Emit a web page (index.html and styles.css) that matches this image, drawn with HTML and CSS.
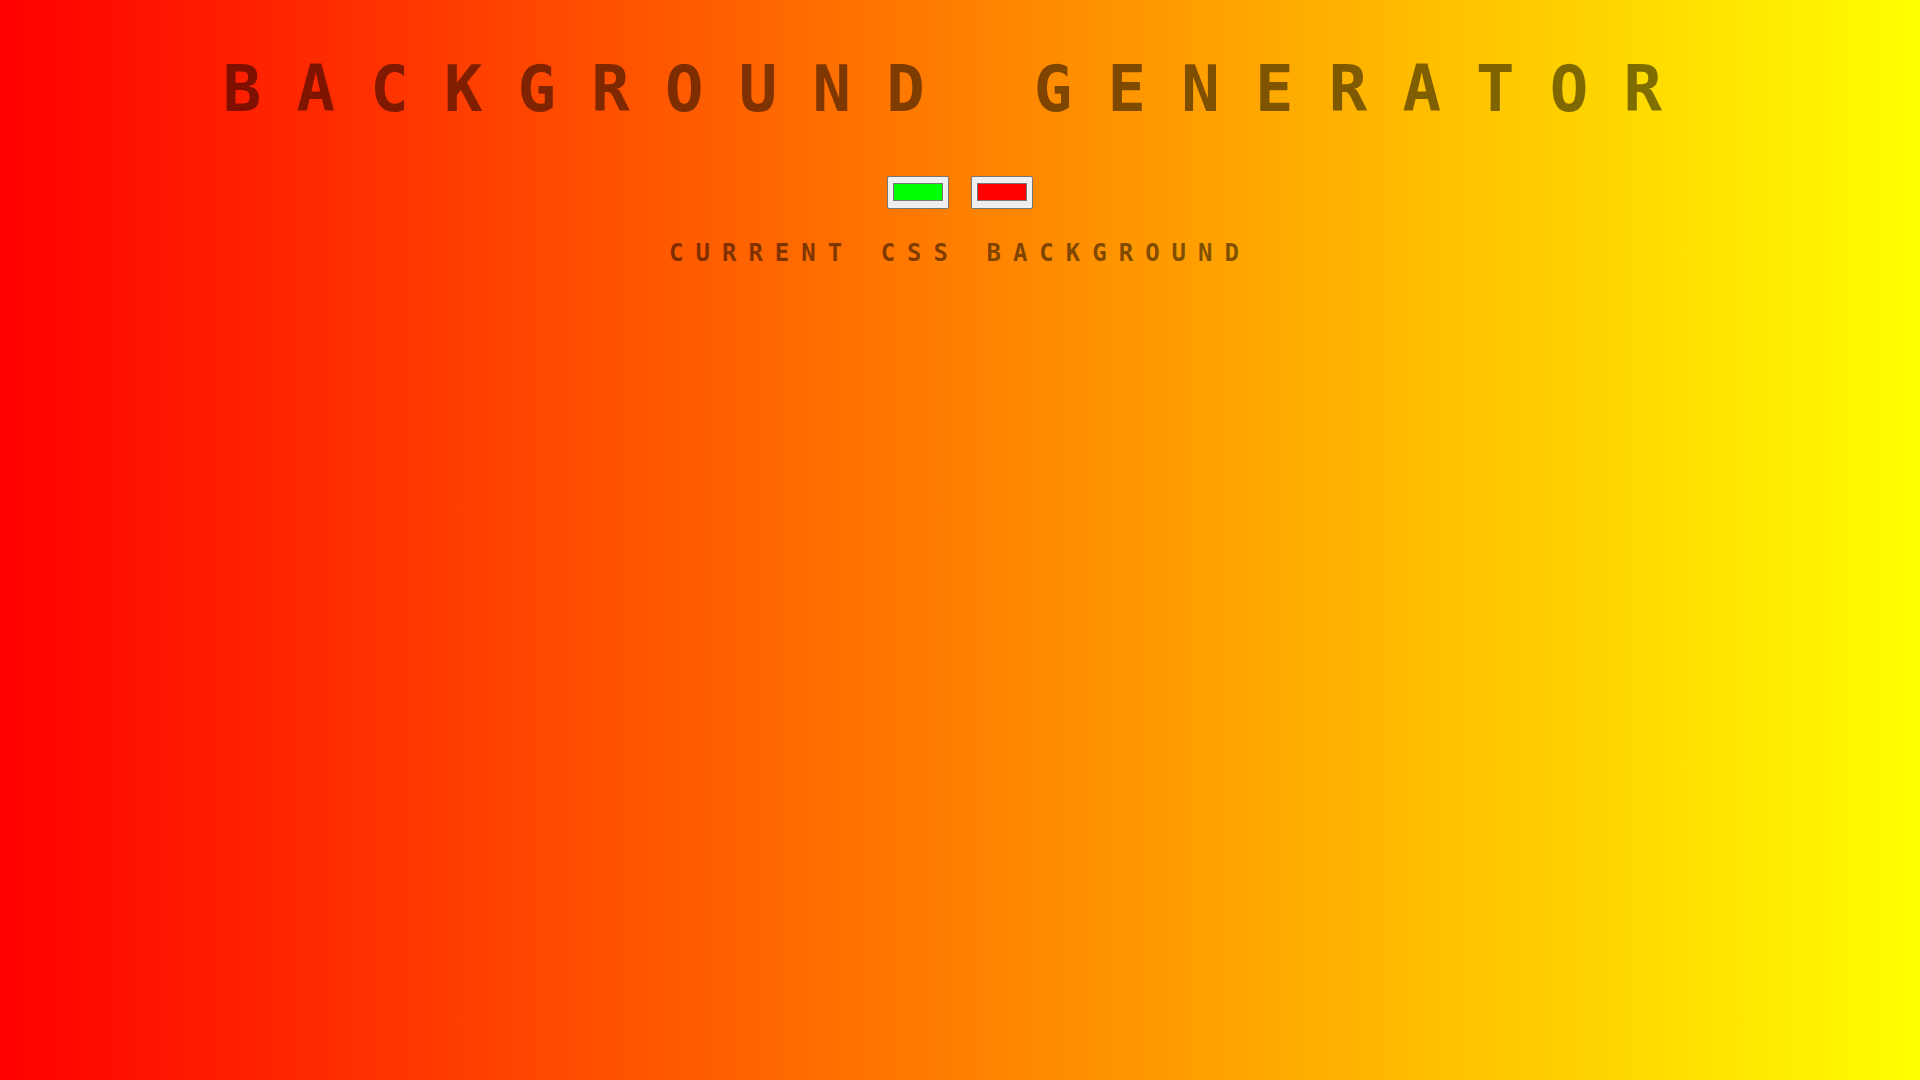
FILE: index.html
```html
<!DOCTYPE html>
<html lang="en">

<head>
  <meta charset="UTF-8">
  <meta name="viewport" content="width=device-width, initial-scale=1.0">
  <title>Background Generator</title>
  <link rel="stylesheet" href="styles.css">
</head>

<body>
  <h1 class="title">Background Generator</h1>

  <div class="pickers">
    <input class="color1" type="color" name="color1" value="#00ff00">
    <input class="color2" type="color" name="color2" value="#ff0000">
  </div>

  <h2 class="subtitle">Current CSS Background</h2>
  <h3 class="css-output"></h3>
</body>

</html>
```

FILE: styles.css
```css
* {
  box-sizing: border-box;
}

body {
  margin: 0;
  min-height: 100vh;
  background: linear-gradient(to right, red, yellow);
  font-family: 'DejaVu Sans Mono', monospace;
  color: rgba(0, 0, 0, 0.5);
  text-align: center;
}

.title {
  margin: 52px 0 50px;
  font-size: 64px;
  font-weight: 700;
  letter-spacing: 0.55em;
  text-transform: uppercase;
}

.pickers {
  display: flex;
  justify-content: center;
  gap: 22px;
}

input[type="color"] {
  width: 62px;
  height: 33px;
  padding: 0;
  border: 1px solid #767676;
  border-radius: 2px;
  background: #efefef;
  cursor: pointer;
}

input[type="color"]::-webkit-color-swatch-wrapper {
  padding: 6px 5px 7px;
}

input[type="color"]::-webkit-color-swatch {
  border: 1px solid #777;
  border-radius: 0;
}

.subtitle {
  margin: 30px 0 0;
  font-size: 24px;
  font-weight: 700;
  letter-spacing: 0.5em;
  text-transform: uppercase;
}

.css-output {
  margin: 0;
  font-size: 16px;
  letter-spacing: 0.5em;
}
```
